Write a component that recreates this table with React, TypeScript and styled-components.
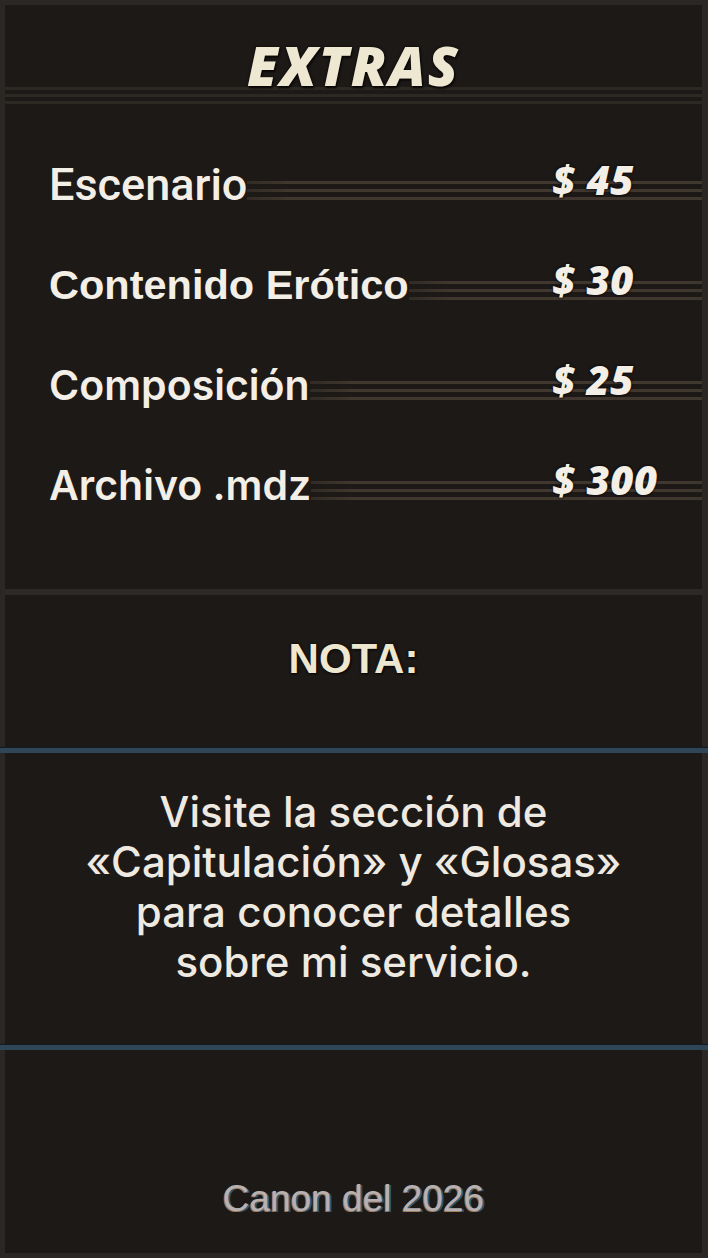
import React from "react";
import styled, { createGlobalStyle } from "styled-components";

const GlobalStyle = createGlobalStyle`
  html, body {
    margin: 0;
    padding: 0;
    background: #1c1917;
  }
  * {
    box-sizing: border-box;
  }
`;

const Page = styled.div`
  width: 708px;
  height: 1258px;
  border: 5px solid #2a2724;
  border-right-width: 6px;
  background: #1c1917;
  display: flex;
  flex-direction: column;
`;

const TitleBar = styled.div`
  padding-top: 30px;
  height: 103px;
  display: flex;
  justify-content: center;
  background: linear-gradient(
      to bottom,
      #2c2822 0 3px,
      transparent 3px 7px,
      #2c2822 7px 10px,
      transparent 10px 14px,
      #2c2822 14px 17px,
      transparent 17px
    )
    0 82px / 100% 17px no-repeat;
`;

const Title = styled.h1`
  margin: 0;
  font-family: "Open Sans", Lato, sans-serif;
  font-style: italic;
  font-weight: 800;
  font-size: 55px;
  letter-spacing: 2px;
  line-height: 60px;
  color: #eee8d2;
  text-shadow: 0 0 3px #0a0807, 1px 2px 2px #0a0807;
`;

const List = styled.div`
  padding-top: 47px;
  display: flex;
  flex-direction: column;
  gap: 40px;
  height: 481px;
`;

const stripes = `
  linear-gradient(
    to bottom,
    #40372e 0 3px,
    transparent 3px 8px,
    #40372e 8px 11px,
    transparent 11px 16px,
    #40372e 16px 19px,
    transparent 19px
  )
`;

const Row = styled.div`
  display: grid;
  grid-template-columns: 503px 1fr;
  height: 60px;
  padding-left: 44px;
  align-items: stretch;
`;

const LabelCell = styled.div`
  display: flex;
  align-items: center;
`;

const Name = styled.span<{ $font: string; $size: number; $weight: number }>`
  font-family: ${(p) => p.$font};
  font-size: ${(p) => p.$size}px;
  font-weight: ${(p) => p.$weight};
  color: #f3eee6;
  white-space: nowrap;
  line-height: 60px;
`;

const Stripe = styled.div`
  flex: 1;
  align-self: stretch;
  background: ${stripes} 0 26px / 100% 19px no-repeat;
  -webkit-mask-image: linear-gradient(to right, rgba(0, 0, 0, 0.6), #000 40px);
`;

const PriceCell = styled.div`
  background: ${stripes} 0 26px / 100% 19px no-repeat;
  display: flex;
  align-items: flex-start;
`;

const Price = styled.span`
  font-family: "Open Sans", Lato, sans-serif;
  font-style: italic;
  font-weight: 800;
  font-size: 40px;
  line-height: 50px;
  letter-spacing: 0.5px;
  color: #f3eee6;
  white-space: nowrap;
  text-shadow: 0 0 3px #0c0a09, 0 0 2px #0c0a09;
`;

const Divider = styled.div`
  height: 6px;
  background: #2d2926;
  flex: none;
`;

const NoteHead = styled.div`
  height: 153px;
  display: flex;
  justify-content: center;
  padding-top: 39px;
`;

const NoteTitle = styled.h2`
  margin: 0;
  font-family: "Liberation Sans", Arial, sans-serif;
  font-weight: 700;
  font-size: 42px;
  line-height: 50px;
  color: #eee7cf;
  text-shadow: 0 0 3px #0a0807, 1px 1px 2px #0a0807;
`;

const BlueRule = styled.div`
  height: 5px;
  margin: 0 -6px 0 -5px;
  background: #2f4656;
  box-shadow: 0 -1px 1px #151b20;
  flex: none;
`;

const NoteBody = styled.p`
  margin: 0;
  height: 292px;
  padding-top: 34px;
  text-align: center;
  font-family: Inter, "Noto Sans", sans-serif;
  font-weight: 500;
  font-size: 42px;
  line-height: 50px;
  color: #efeae1;
`;

const Footer = styled.div`
  flex: 1;
  display: flex;
  justify-content: center;
  align-items: flex-end;
  padding-bottom: 33px;
`;

const Signature = styled.span`
  font-family: "Liberation Sans", Arial, sans-serif;
  font-size: 37px;
  font-weight: 400;
  color: #b6b1b2;
  text-shadow: -1px 1px 0 rgba(196, 140, 92, 0.8), 2px 1px 0 rgba(52, 96, 128, 0.9);
`;

const extras = [
  { name: "Escenario", price: "$ 45", font: "Roboto, sans-serif", size: 45, weight: 500 },
  { name: "Contenido Erótico", price: "$ 30", font: "'Liberation Sans', Arial, sans-serif", size: 41.5, weight: 700 },
  { name: "Composición", price: "$ 25", font: "Inter, sans-serif", size: 41, weight: 600 },
  { name: "Archivo .mdz", price: "$ 300", font: "Inter, sans-serif", size: 41, weight: 600 },
];

const App: React.FC = () => {
  return (
    <>
      <GlobalStyle />
      <Page>
        <TitleBar>
          <Title>EXTRAS</Title>
        </TitleBar>
        <List>
          {extras.map((item) => (
            <Row key={item.name}>
              <LabelCell>
                <Name $font={item.font} $size={item.size} $weight={item.weight}>
                  {item.name}
                </Name>
                <Stripe />
              </LabelCell>
              <PriceCell>
                <Price>{item.price}</Price>
              </PriceCell>
            </Row>
          ))}
        </List>
        <Divider />
        <NoteHead>
          <NoteTitle>NOTA:</NoteTitle>
        </NoteHead>
        <BlueRule />
        <NoteBody>
          Visite la sección de
          <br />
          «Capitulación» y «Glosas»
          <br />
          para conocer detalles
          <br />
          sobre mi servicio.
        </NoteBody>
        <BlueRule />
        <Footer>
          <Signature>Canon del 2026</Signature>
        </Footer>
      </Page>
    </>
  );
};

export default App;
